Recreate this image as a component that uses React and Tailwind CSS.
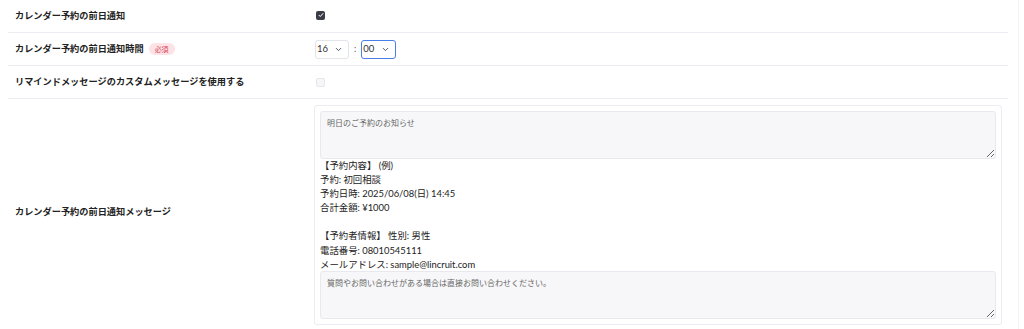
import React from "react";

const font = { fontFamily: '"Lato", "Noto Sans CJK JP", sans-serif' };

function Chevron() {
  return (
    <svg width="9" height="9" viewBox="0 0 24 24" fill="none" stroke="#4b5563" strokeWidth="2.6" strokeLinecap="round" strokeLinejoin="round">
      <path d="M6 9l6 6 6-6" />
    </svg>
  );
}

function Row({ label, badge, children, className = "" }) {
  return (
    <div className={`flex border-b border-[#ececf2] ${className}`}>
      <div className="w-[307px] shrink-0 pl-[7px] flex items-center gap-[5px]">
        <span className="text-[9.2px] font-bold text-[#222]">{label}</span>
        {badge && (
          <span className="rounded-full bg-[#fde3e6] px-[6px] h-[12px] flex items-center text-[7px] text-[#d9475a]">必須</span>
        )}
      </div>
      <div className="flex-1 flex items-center">{children}</div>
    </div>
  );
}

const taStyle = { fontFamily: '"DejaVu Sans", "Noto Sans CJK JP", sans-serif' };

export default function App() {
  return (
    <div className="w-[1024px] h-[329px] bg-white overflow-hidden flex" style={font}>
      <div className="w-[1000px] ml-[8px] flex flex-col">
        <Row label="カレンダー予約の前日通知" className="h-[33px]">
          <div className="ml-[1px] mt-[-2px] w-[9px] h-[9px] rounded-[2px] bg-[#3a3d46] flex items-center justify-center">
            <svg width="6" height="6" viewBox="0 0 24 24" fill="none" stroke="white" strokeWidth="4" strokeLinecap="round" strokeLinejoin="round">
              <path d="M4 13l5 5 11-12" />
            </svg>
          </div>
        </Row>
        <Row label="カレンダー予約の前日通知時間" badge className="h-[33px]">
          <div className="flex items-center">
            <div className="w-[34px] h-[19px] border border-[#e3e4ea] rounded-[3px] flex items-center justify-between pl-[1px] pr-[5px] text-[9.5px] text-[#333]">
              <span>16</span>
              <Chevron />
            </div>
            <span className="mx-[5px] text-[9px] text-[#555]">:</span>
            <div className="w-[35px] h-[19px] border-[1.5px] border-[#4a7fe8] rounded-[3px] flex items-center justify-between pl-[1px] pr-[5px] text-[9.5px] text-[#333]">
              <span>00</span>
              <Chevron />
            </div>
          </div>
        </Row>
        <Row label="リマインドメッセージのカスタムメッセージを使用する" className="h-[33px]">
          <div className="ml-[1px] w-[9px] h-[9px] rounded-[2px] border border-[#e6e7ec] bg-[#f6f6f8]" />
        </Row>
        <div className="flex flex-1">
          <div className="w-[306px] shrink-0 pl-[7px] flex items-center">
            <span className="text-[9.2px] font-bold text-[#222] mt-[-4px]">カレンダー予約の前日通知メッセージ</span>
          </div>
          <div className="pt-[6px]">
            <div className="w-[688px] border border-[#ececf2] rounded-[3px] px-[5px] pt-[5px] pb-[5px] flex flex-col">
              <textarea
                readOnly
                placeholder="明日のご予約のお知らせ"
                className="h-[48px] w-full bg-[#f7f7f9] border border-[#e8e8ee] rounded-[3px] px-[6px] pt-[6px] text-[8px] text-[#555] placeholder-[#666] outline-none"
                style={taStyle}
              />
              <div className="text-[9.4px] leading-[14.1px] text-[#222] whitespace-pre-line mb-[-1px]">
                {"【予約内容】 (例)\n予約: 初回相談\n予約日時: 2025/06/08(日) 14:45\n合計金額: ¥1000\n\n【予約者情報】 性別: 男性\n電話番号: 08010545111\nメールアドレス: sample@lincruit.com"}
              </div>
              <textarea
                readOnly
                placeholder="質問やお問い合わせがある場合は直接お問い合わせください。"
                className="h-[48px] w-full bg-[#f7f7f9] border border-[#e8e8ee] rounded-[3px] px-[6px] pt-[6px] text-[8px] text-[#555] placeholder-[#666] outline-none"
                style={taStyle}
              />
            </div>
          </div>
        </div>
      </div>
      <div className="ml-[10px] w-[1px] bg-[#f3f3f6]" />
    </div>
  );
}
